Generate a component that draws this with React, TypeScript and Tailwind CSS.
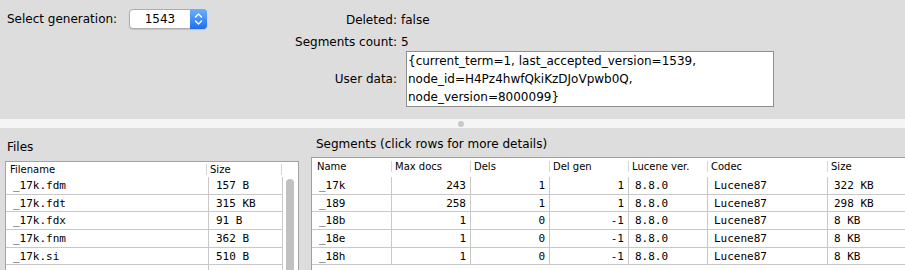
const files = [
  ["_17k.fdm", "157 B"],
  ["_17k.fdt", "315 KB"],
  ["_17k.fdx", "91 B"],
  ["_17k.fnm", "362 B"],
  ["_17k.si", "510 B"],
  ["", ""],
];

const segments = [
  ["_17k", "243", "1", "1", "8.8.0", "Lucene87", "322 KB"],
  ["_189", "258", "1", "1", "8.8.0", "Lucene87", "298 KB"],
  ["_18b", "1", "0", "-1", "8.8.0", "Lucene87", "8 KB"],
  ["_18e", "1", "0", "-1", "8.8.0", "Lucene87", "8 KB"],
  ["_18h", "1", "0", "-1", "8.8.0", "Lucene87", "8 KB"],
];

const segCols = [
  { name: "Name", w: "w-[80px]", right: false },
  { name: "Max docs", w: "w-[79px]", right: true },
  { name: "Dels", w: "w-[79px]", right: true },
  { name: "Del gen", w: "w-[79px]", right: true },
  { name: "Lucene ver.", w: "w-[79px]", right: false },
  { name: "Codec", w: "w-[120px]", right: false },
  { name: "Size", w: "w-[90px]", right: false },
];

const mono = "font-['DejaVu_Sans_Mono',monospace]";

const Combo = () => (
  <div className="flex h-[20px] w-[78px] shrink-0 rounded-[4px] border border-[#adadad] bg-white shadow-[0_1px_1px_rgba(0,0,0,0.12)]">
    <div className="flex-1 text-center leading-[18px]">1543</div>
    <div className="-my-px -mr-px flex w-[17px] items-center justify-center rounded-r-[4px] bg-gradient-to-b from-[#6cb0fb] to-[#1a6ff0]">
      <svg width="9" height="14" viewBox="0 0 9 14" fill="none" stroke="white" strokeWidth="1.4" strokeLinecap="round" strokeLinejoin="round">
        <path d="M1.5 5 L4.5 2 L7.5 5" />
        <path d="M1.5 9 L4.5 12 L7.5 9" />
      </svg>
    </div>
  </div>
);

const App = () => {
  return (
    <div className="h-[270px] w-[905px] overflow-hidden bg-[#dddddd] font-['DejaVu_Sans',sans-serif] text-[12px] leading-[18px] text-black">
      {/* Commit info */}
      <div className="flex h-[119px]">
        <div className="flex w-[207px] shrink-0 items-start pt-[9px]">
          <span className="w-[129px] shrink-0 pl-[7px] leading-[20px]">Select generation:</span>
          <Combo />
        </div>
        <div className="pt-[11px]">
          <div className="flex">
            <span className="w-[190px] text-right">Deleted:</span>
            <span className="ml-[4px]">false</span>
          </div>
          <div className="mt-[4px] flex">
            <span className="w-[190px] text-right">Segments count:</span>
            <span className="ml-[4px]">5</span>
          </div>
          <div className="flex items-center">
            <span className="w-[190px] text-right">User data:</span>
            <div className="ml-[9px] h-[56px] w-[368px] border border-[#8e8e8e] bg-white pl-[1px]">
              <div>{"{current_term=1, last_accepted_version=1539,"}</div>
              <div>node_id=H4Pz4hwfQkiKzDJoVpwb0Q,</div>
              <div>{"node_version=8000099}"}</div>
            </div>
          </div>
        </div>
      </div>

      {/* Split divider */}
      <div className="flex h-[9px] items-center bg-[#f5f5f5] pl-[458px]">
        <div className="h-[6px] w-[6px] rounded-full bg-[#c9c9c9]" />
      </div>

      <div className="flex h-[142px]">
        {/* Files */}
        <div className="w-[311px] shrink-0 pl-[5px]">
          <div className="mb-[5px] pl-[2px] pt-[10px]">Files</div>
          <div className="h-[200px] w-[294px] border-l border-r border-t border-[#a3a3a3] bg-white">
            <div className="flex h-[15px] items-center text-[10px] leading-[15px]">
              <div className="w-[201px] border-r border-[#d6d6d6] pl-[4px] leading-[11px]">Filename</div>
              <div className="w-[75px] border-r border-[#d6d6d6] pl-[3px] leading-[11px]">Size</div>
            </div>
            <div className="flex">
              <div className="w-[277px]">
                {files.map((f, i) => (
                  <div key={i} className={`flex h-[17.65px] border-b border-[#c8c8c8] ${mono} text-[11px] leading-[17px]`}>
                    <div className="w-[203px] border-r border-[#c8c8c8] pl-[7px]">{f[0]}</div>
                    <div className="flex-1 border-r border-[#c8c8c8] pl-[7px]">{f[1]}</div>
                  </div>
                ))}
              </div>
              <div className="w-[15px] pl-[3px] pt-[2px]">
                <div className="h-[120px] w-[8px] rounded-full bg-[#c1c1c1]" />
              </div>
            </div>
          </div>
        </div>

        {/* Segments */}
        <div className="min-w-0 flex-1 overflow-hidden">
          <div className="mb-[4px] whitespace-nowrap pl-[5px] pt-[7px]">Segments (click rows for more details)</div>
          <div className="h-[200px] w-[640px] border-l border-t border-[#76a7df] bg-white">
            <div className="flex h-[19px] items-start pt-[3px] text-[10px] leading-[11px]">
              {segCols.map((c, i) => (
                <div
                  key={c.name}
                  className={`${c.w} shrink-0 ${i === 0 ? "pl-[5px]" : "pl-[3px]"} ${i < 6 ? "border-r border-[#d6d6d6]" : ""}`}
                >
                  {c.name}
                </div>
              ))}
            </div>
            {segments.map((r, ri) => (
              <div key={ri} className={`flex h-[17.65px] border-b border-[#c8c8c8] ${mono} text-[11px] leading-[17px]`}>
                {r.map((v, i) => (
                  <div
                    key={i}
                    className={`${segCols[i].w} shrink-0 ${segCols[i].right ? "pr-[4px] text-right" : i === 0 ? "pl-[7px]" : "pl-[6px]"} ${i < 6 ? "border-r border-[#c8c8c8]" : ""}`}
                  >
                    {v}
                  </div>
                ))}
              </div>
            ))}
          </div>
        </div>
      </div>
    </div>
  );
};

export default App;
